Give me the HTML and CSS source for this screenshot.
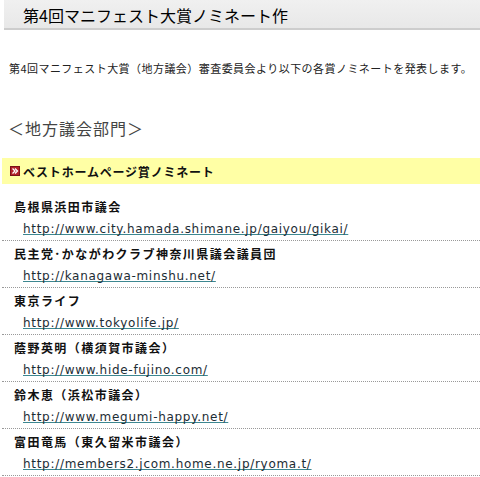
FILE: index.html
```html
<!DOCTYPE html>
<html lang="ja">
<head>
<meta charset="utf-8">
<title>第4回マニフェスト大賞ノミネート作</title>
<link rel="stylesheet" href="styles.css">
</head>
<body>
<h1 class="title">第4回マニフェスト大賞ノミネート作</h1>
<p class="intro">第4回マニフェスト大賞（地方議会）審査委員会より以下の各賞ノミネートを発表します。</p>
<h2 class="section">＜地方議会部門＞</h2>
<div class="award">
  <svg class="award-icon" width="10" height="10" viewBox="0 0 10 10"><rect x="0" y="0" width="10" height="10" fill="#b3212a"/><rect x="0.5" y="0.5" width="9" height="9" fill="none" stroke="#7a1118" stroke-width="1"/><path d="M2.5 2.5 L5 5 L2.5 7.5 M5 2.5 L7.5 5 L5 7.5" fill="none" stroke="#fff" stroke-width="1.3"/></svg>
  <span class="award-name">ベストホームページ賞ノミネート</span>
</div>
<ul class="list">
  <li class="item"><div class="name">島根県浜田市議会</div><a class="link" href="#">http://www.city.hamada.shimane.jp/gaiyou/gikai/</a></li>
  <li class="item"><div class="name">民主党･かながわクラブ神奈川県議会議員団</div><a class="link" href="#">http://kanagawa-minshu.net/</a></li>
  <li class="item"><div class="name">東京ライフ</div><a class="link" href="#">http://www.tokyolife.jp/</a></li>
  <li class="item"><div class="name">蔭野英明（横須賀市議会）</div><a class="link" href="#">http://www.hide-fujino.com/</a></li>
  <li class="item"><div class="name">鈴木恵（浜松市議会）</div><a class="link" href="#">http://www.megumi-happy.net/</a></li>
  <li class="item"><div class="name">富田竜馬（東久留米市議会）</div><a class="link" href="#">http://members2.jcom.home.ne.jp/ryoma.t/</a></li>
</ul>
</body>
</html>
```
FILE: styles.css
```css
html, body {
  margin: 0;
  padding: 0;
  background: #fff;
}
body {
  width: 480px;
  height: 477px;
  overflow: hidden;
  font-family: "Noto Sans CJK JP", "DejaVu Sans", sans-serif;
  color: #111;
}
.title {
  margin: 0 0 0 4px;
  padding: 2px 0 0 19px;
  height: 26px;
  line-height: 26px;
  font-size: 16px;
  font-weight: normal;
  letter-spacing: 0;
  color: #000;
  background: linear-gradient(#f0f0f0, #e8e8e8);
  border-bottom: 2px solid #cdcdcd;
}
.intro {
  margin: 30px 0 0 0;
  padding-left: 9px;
  font-size: 11px;
  line-height: 16px;
  letter-spacing: 0.45px;
  color: #222;
  white-space: nowrap;
}
.section {
  margin: 41px 0 0 0;
  padding-left: 8px;
  font-size: 16px;
  line-height: 22px;
  font-weight: normal;
  letter-spacing: 1px;
  color: #444;
}
.award {
  margin: 19px 0 0 2px;
  height: 26px;
  display: flex;
  align-items: center;
  gap: 3px;
  padding-left: 8px;
  background: #ffffa5;
}
.award-icon {
  display: block;
  flex: none;
}
.award-name {
  font-size: 12px;
  font-weight: bold;
  letter-spacing: 0.8px;
  color: #111;
}
.list {
  list-style: none;
  margin: 10px 0 0 0;
  padding: 0;
}
.item {
  margin-left: 2px;
  padding-top: 2px;
  border-bottom: 1px dotted #999;
}
.name {
  padding-left: 12px;
  font-size: 12px;
  line-height: 22px;
  height: 22px;
  font-weight: bold;
  letter-spacing: 1.45px;
  color: #111;
}
.link {
  display: block;
  padding-left: 21px;
  height: 22px;
  line-height: 22px;
  font-family: "DejaVu Sans", sans-serif;
  font-size: 12px;
  letter-spacing: 0.7px;
  color: #1c2c34;
  text-decoration: underline;
  text-decoration-color: #3d8790;
  text-decoration-skip-ink: none;
}
```
